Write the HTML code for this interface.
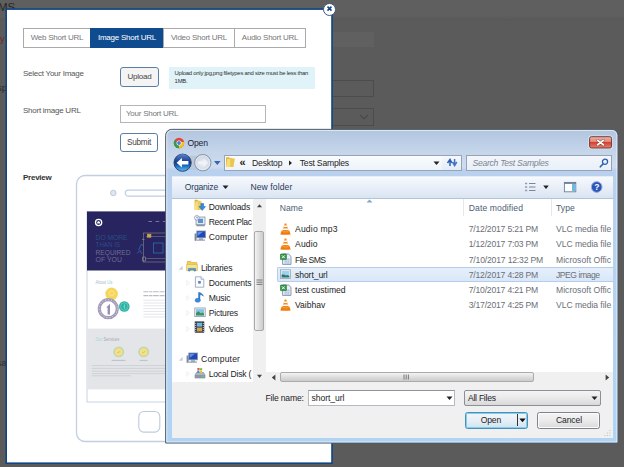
<!DOCTYPE html>
<html lang="en"><head><meta charset="utf-8"><title>Image Short URL</title>
<style>
*{box-sizing:border-box;margin:0;padding:0}
html,body{width:624px;height:467px;overflow:hidden}
body{background:#5b5b5b;font-family:"Liberation Sans",Arial,sans-serif;position:relative}
.a{position:absolute}
.t{position:absolute;white-space:nowrap;line-height:1}
/* dimmed page behind */
#bgtop{left:0;top:0;width:624px;height:21px;background:linear-gradient(#5f5f5f,#5e5e5e 17px,#585858 20px,#5b5b5b)}
/* modal */
#close{left:323px;top:3px;width:13px;height:13px;border-radius:50%;background:#fff;border:1px solid #41597a}
.tab{position:absolute;top:28px;height:20px;border:1px solid #aaa;background:#fff;color:#777;font-size:8px;letter-spacing:-.25px;text-align:center;line-height:18px;white-space:nowrap}
.lbl{color:#555;font-size:8px;letter-spacing:-.25px}
.btn{position:absolute;border:1px solid #5a7fa6;border-radius:3px;background:#f4f4f4;color:#444;font-size:8px;letter-spacing:-.25px;text-align:center}
/* dialog */
.w{font-size:9.4px;color:#1e1e2a}
</style></head><body>
<div id="bgtop" class="a"></div>

<!-- dimmed page fragments -->
<div class="t" style="left:-2px;top:2px;font-size:11.5px;color:#262626">MS</div>
<div class="t" style="left:-3px;top:35px;font-size:9px;color:#6c2a2a">ry</div>
<div class="t" style="left:-3px;top:83px;font-size:9.5px;color:#2b2b2b">sp</div>
<div class="t" style="left:-3.5px;top:358px;font-size:9.5px;color:#2b2b2b">sa</div>
<div class="a" style="left:332px;top:32px;width:42px;height:15px;background:#606060"></div>
<div class="a" style="left:332px;top:80px;width:42px;height:17px;border:1px solid #4c4c4c;border-left:0"></div>
<div class="a" style="left:332px;top:108px;width:42px;height:18px;border:1px solid #4c4c4c;border-left:0"></div>
<svg class="a" style="left:358px;top:112px" width="12" height="10"><path d="M2 3 L6 7 L10 3" fill="none" stroke="#4a4a4a" stroke-width="1.2"/></svg>
<svg id="modal" class="a" style="left:0;top:0" width="340" height="467"><rect x="6.2" y="9.1" width="325.8" height="454.1" fill="#fff" stroke="#0f4585" stroke-width="1.6"/></svg>
<div id="close" class="a"></div>
<svg class="a" style="left:323px;top:3px" width="13" height="13"><path d="M4.5 3.6 L8.5 7.6 M8.5 3.6 L4.5 7.6" stroke="#0f4585" stroke-width="1.5" fill="none"/></svg>
<!-- tabs -->
<div class="tab" style="left:23px;width:68px">Web Short URL</div>
<div class="tab" style="left:90px;width:74px;background:#0f4c8f;border-color:#0f4c8f;color:#fff">Image Short URL</div>
<div class="tab" style="left:163px;width:72px">Video Short URL</div>
<div class="tab" style="left:234px;width:72px">Audio Short URL</div>
<!-- form -->
<div class="t lbl" style="left:23px;top:70px">Select Your Image</div>
<div class="btn" style="left:120px;top:67px;width:39px;height:20px;line-height:18px">Upload</div>
<div class="a" style="left:169px;top:67px;width:146px;height:22px;background:#e0f3f8"></div>
<div class="a" style="left:174.6px;top:69px;width:144px;font-size:5.9px;letter-spacing:-.235px;line-height:8px;color:#2e2e2e">Upload only jpg,png filetypes and size must be less than 1MB.</div>
<div class="t lbl" style="left:23px;top:107px">Short image URL</div>
<div class="a" style="left:120px;top:105px;width:146px;height:18px;border:1px solid #b5b5b5;background:#fff"></div>
<div class="t" style="left:126px;top:110px;font-size:8px;letter-spacing:-.25px;color:#777">Your Short URL</div>
<div class="btn" style="left:120px;top:133px;width:38px;height:19px;line-height:17px;background:#fff;font-size:8.2px">Submit</div>
<div class="t" style="left:23px;top:174px;font-size:8px;letter-spacing:-.25px;font-weight:bold;color:#333">Preview</div>

<!-- tablet preview -->
<svg class="a" style="left:70px;top:170px" width="110" height="280" viewBox="70 170 110 280" font-family="Liberation Sans, sans-serif">
<path d="M180 175.5 H85 a8.5 8.5 0 0 0 -8.5 8.5 V433 a8.5 8.5 0 0 0 8.5 8.5 H180" fill="#fff" stroke="#c0d0e1" stroke-width="1.3"/>
<circle cx="113.3" cy="193" r="2.8" fill="#dde5ee" stroke="#b7c7d9" stroke-width=".9"/>
<path d="M180 190.2 H128.3 a3 3 0 0 0 0 6 H180" fill="#fff" stroke="#c0d0e1" stroke-width="1.2"/>
<rect x="87" y="211.5" width="100" height="190.5" fill="#fff" stroke="#b9c9d9" stroke-width=".8"/>
<rect x="87" y="211.5" width="100" height="59" fill="#27245f"/>
<circle cx="98.6" cy="222.5" r="3.1" fill="#27245f" stroke="#fff" stroke-width="1.3"/>
<path d="M97.2 223.6 v-1.6 l1.4 -1.1 l1.4 1.1 v1.6z" fill="#fff"/>
<path d="M148.4 221.5 h3.6 M155.6 221.5 h3.6 M162.8 221.5 h3.6" stroke="#8b89b0" stroke-width=".8"/>
<text x="95.6" y="239.8" font-size="7" fill="#285088" textLength="32" lengthAdjust="spacingAndGlyphs">DO MORE</text>
<text x="95.6" y="247.1" font-size="7" fill="#285088" textLength="24.5" lengthAdjust="spacingAndGlyphs">THAN IS</text>
<text x="95.6" y="254.5" font-size="7" fill="#706d94" textLength="34.8" lengthAdjust="spacingAndGlyphs">REQUIRED</text>
<text x="95.6" y="261.9" font-size="7" fill="#706d94" textLength="26.3" lengthAdjust="spacingAndGlyphs">OF YOU</text>
<g fill="none" stroke-width=".7">
<rect x="143.5" y="233" width="40" height="29" stroke="#7f7a78"/>
<path d="M146 236.5 h34 M146 258.5 h34" stroke="#6f6b86"/>
<rect x="147.5" y="234.2" width="3.4" height="3" stroke="#c9a94a" fill="#c9a94a"/>
<rect x="153.5" y="243" width="9.5" height="10" stroke="#2f78c0"/>
<path d="M138.5 250 l3 -6 l2.5 3 M137 253.5 l3 -3 l2 3.5 M165 244 l3 4 l-3 4 M170 243 l3 5" stroke="#2f78c0"/>
<path d="M142.5 257 h3 v4 h-3z M142 239.5 h2.5" stroke="#8d8797"/>
</g>
<text x="95.4" y="283.8" font-size="4.8" fill="#b4b8c6" textLength="17" lengthAdjust="spacingAndGlyphs">About <tspan fill="#86d3cc">Us</tspan></text>
<circle cx="111.6" cy="293.9" r="6.3" fill="#f6d75c"/>
<circle cx="111.8" cy="293.2" r="2.5" fill="none" stroke="#fae9a0" stroke-width=".8"/>
<circle cx="108.3" cy="308.7" r="9" fill="#fff" stroke="#a39db9" stroke-width="3.2"/>
<circle cx="108.3" cy="308.7" r="9" fill="none" stroke="#e6e3ee" stroke-width="1" stroke-dasharray=".9 2.1"/>
<path d="M106.2 307.4 l3.8 -3.6 v10.6 h-2.4 v-6.6 z" fill="#9690ae"/>
<circle cx="124.3" cy="306.5" r="5.3" fill="#2bb3a4"/>
<circle cx="124.3" cy="306.5" r="3.7" fill="none" stroke="#7fd6cb" stroke-width=".6"/>
<path d="M125.4 304 a2.7 2.7 0 0 0 0 5 a3.4 3.4 0 0 1 0 -5z" fill="#e4f7f4"/>
<g stroke="#dcdee3" stroke-width=".8">
<path d="M143.4 291.8 h36 M143.4 295.6 h36" stroke="#b9bcc4" stroke-width="1.1" stroke-dasharray="5 .7 3 .6 6 .8"/>
<path d="M143.4 300.2 h36 M143.4 303 h36 M143.4 305.8 h36 M143.4 308.6 h36 M143.4 311.4 h36 M143.4 314.2 h36 M143.4 317 h30"/>
</g>
<rect x="87.2" y="328.6" width="100" height="60.8" fill="#e4e5e8"/>
<text x="95.4" y="341.4" font-size="4.8" fill="#a6aab4" textLength="24" lengthAdjust="spacingAndGlyphs"><tspan fill="#9fdad3">Our</tspan> Services</text>
<circle cx="118.7" cy="351.9" r="4.6" fill="#f6df8a" stroke="#bfdaa6" stroke-width="1.7"/>
<circle cx="143.7" cy="351.9" r="4.6" fill="#f6df8a" stroke="#bfdaa6" stroke-width="1.7"/>
<path d="M117.2 352 l1.1 1.1 l1.9 -2.3 M142.2 352 l1.1 1.1 l1.9 -2.3" fill="none" stroke="#eeb457" stroke-width=".8"/>
<path d="M111.6 360.4 h14 M139.6 360.4 h8" stroke="#bcbfc6" stroke-width="1"/>
<g stroke="#c9cbd1" stroke-width=".8">
<path d="M91.8 365.6 h90 M91.8 368.4 h90 M91.8 371.2 h90 M91.8 373.6 h90 M91.8 375.8 h39"/>
</g>
<rect x="138.8" y="411.5" width="21" height="20.6" rx="5" fill="#fff" stroke="#bccbdc" stroke-width="1.1"/>
</svg>
<!-- Open file dialog -->
<svg id="dlg" class="a" style="left:160px;top:124px" width="464" height="326" viewBox="160 124 464 326">
<defs><linearGradient id="fr" gradientUnits="userSpaceOnUse" x1="0" y1="129" x2="0" y2="443"><stop offset="0" stop-color="#b1c5de"/><stop offset=".07" stop-color="#c4d5ea"/><stop offset=".121" stop-color="#cfddee"/><stop offset=".131" stop-color="#b9d1ee"/><stop offset=".382" stop-color="#b9d2ef"/><stop offset="1" stop-color="#b0d4f4"/></linearGradient></defs>
<path d="M165.65 443.05 V135.35 a6 6 0 0 1 6 -6 H611.95 a6 6 0 0 1 6 6 V443.05 Z" fill="url(#fr)" stroke="#4f5a67" stroke-width="1"/>
<path d="M166.75 441.95 V135.6 a5.1 5.1 0 0 1 5.1 -5.1 H611.75 a5.1 5.1 0 0 1 5.1 5.1 V441.95 Z" fill="none" stroke="#fff" stroke-opacity=".55" stroke-width="1"/>
</svg>
<svg class="a" style="left:173px;top:136.5px" width="12" height="12" viewBox="-6 -6 12 12">
<circle r="5.2" fill="#e94335"/>
<path d="M0 0 L-4.5 2.6 A5.2 5.2 0 0 0 0 5.2 L1 5.1 Z" fill="#2d9f4b"/>
<path d="M-4.5 -2.6 L0 0 L-1.2 5.1 A5.2 5.2 0 0 1 -4.5 -2.6Z" fill="#2d9f4b"/>
<path d="M0 0 L0.8 -1.2 L5.1 -1 A5.2 5.2 0 0 1 0 5.2 Z" fill="#f8c21b"/>
<circle r="2.5" fill="#fff"/><circle r="1.9" fill="#3f7fe8"/></svg>
<div class="t" style="left:187.5px;top:139px;font-size:8.6px;color:#1a2233;letter-spacing:-0.179px;">Open</div>
<svg class="a" style="left:586px;top:133px" width="30" height="19" viewBox="586 133 30 19"><defs><linearGradient id="cb" x1="0" y1="0" x2="0" y2="1"><stop offset="0" stop-color="#eeb1a6"/><stop offset=".45" stop-color="#e38878"/><stop offset=".5" stop-color="#d5402b"/><stop offset="1" stop-color="#e48370"/></linearGradient></defs><rect x="589.1" y="136.2" width="23" height="12.3" rx="2.2" fill="none" stroke="#fff" stroke-opacity=".5" stroke-width="1.6"/><rect x="589.6" y="136.7" width="22" height="11.3" rx="1.8" fill="url(#cb)" stroke="#5e3036" stroke-width=".9"/><path d="M597.6 140.4 L603.4 144.8 M603.4 140.4 L597.6 144.8" stroke="#5a2d2d" stroke-opacity=".55" stroke-width="2.8" stroke-linecap="round"/><path d="M597.6 140.4 L603.4 144.8 M603.4 140.4 L597.6 144.8" stroke="#fff" stroke-width="1.7" stroke-linecap="round"/></svg>
<svg class="a" style="left:172px;top:152px" width="52" height="22" viewBox="172 152 52 22">
<defs><linearGradient id="gb" x1="0" y1="0" x2="0" y2="1"><stop offset="0" stop-color="#3565b8"/><stop offset=".48" stop-color="#133a8c"/><stop offset=".62" stop-color="#1556b4"/><stop offset="1" stop-color="#55c6fc"/></linearGradient>
<linearGradient id="gb2" x1="0" y1="0" x2="0" y2="1"><stop offset="0" stop-color="#6d93d6" stop-opacity=".75"/><stop offset="1" stop-color="#2a55a8" stop-opacity="0"/></linearGradient>
<radialGradient id="gf" cx=".5" cy=".55" r=".6"><stop offset="0" stop-color="#eef2f7"/><stop offset=".6" stop-color="#d4dce7"/><stop offset="1" stop-color="#bcc6d4"/></radialGradient></defs>
<path d="M184 155.8 H202 V169.6 H184Z" fill="#aebccf" opacity=".55"/>
<circle cx="182.6" cy="162.7" r="8.6" fill="url(#gb)" stroke="#2d3f63" stroke-width="1"/>
<path d="M175 161.5 a7.6 7.6 0 0 1 15.2 0 q-7.6 2.4 -15.2 0z" fill="url(#gb2)"/>
<path d="M176.6 162.7 L181.9 157.9 V160.9 H188.4 V164.5 H181.9 V167.5Z" fill="#fff"/>
<circle cx="202.8" cy="162.7" r="8.2" fill="url(#gf)" stroke="#8793a5" stroke-width="1"/>
<circle cx="202.8" cy="162.7" r="7" fill="none" stroke="#fff" stroke-width=".8" opacity=".7"/>
<path d="M208.4 162.7 L203.6 158.6 V161.2 H198 V164.2 H203.6 V166.8Z" fill="#f2f5f9" opacity=".8"/>
<path d="M214 160.9 H220.6 L217.3 164.9Z" fill="#3466b8"/>
</svg>
<div class="a" style="left:223.5px;top:154.5px;width:219px;height:16px;border:1px solid #98a3b4;background:linear-gradient(#fafcfe,#eef3fa)"></div>
<div class="a" style="left:442px;top:154.5px;width:20px;height:16px;border:1px solid #98a3b4;border-left:0;background:linear-gradient(#f6f9fd,#e3ecf7)"></div>
<svg class="a" style="left:225px;top:156px" width="11" height="12" viewBox="0 0 11 12">
<path d="M1 1.2 H4.2 L5 2.2 H7.5 V11 H1Z" fill="#e2b93c"/><path d="M2.2 3 H9.6 L8.2 11 H1Z" fill="#f6dc7a"/><path d="M5.2 2.6 H9.8 L8.4 11 H5.2Z" fill="#ecc650"/></svg>
<div class="t" style="left:239.6px;top:157px;font-size:11px;color:#222;font-weight:bold;">«</div>
<div class="t" style="left:252px;top:159px;font-size:8.6px;color:#1d1d26;letter-spacing:-0.175px;">Desktop</div>
<svg class="a" style="left:288px;top:160px" width="5" height="6"><path d="M1 .5 L4 3 L1 5.5Z" fill="#222"/></svg>
<div class="t" style="left:299.7px;top:159px;font-size:8.6px;color:#1d1d26;letter-spacing:-0.193px;">Test Samples</div>
<svg class="a" style="left:433px;top:161px" width="7" height="5"><path d="M.5 .5 H6.5 L3.5 4Z" fill="#222"/></svg>
<svg class="a" style="left:446px;top:157px" width="12" height="11" viewBox="0 0 12 11"><g fill="none" stroke="#2f62b5" stroke-width="1.5"><path d="M1.5 6 L4 2.5 L6 6 M4 3 V9"/><path d="M6.5 5 L8.6 8.5 L10.8 5 M8.6 8 V2" stroke="#3f76c8"/></g></svg>
<div class="a" style="left:466px;top:155px;width:146px;height:15.5px;border:1px solid #98a3b4;background:linear-gradient(#f3f7fc,#e9f0f9)"></div>
<div class="t" style="left:472.6px;top:159px;font-size:8.6px;color:#7d8592;font-style:italic;letter-spacing:-0.29px;">Search Test Samples</div>
<svg class="a" style="left:599px;top:157.5px" width="10" height="10" viewBox="0 0 10 10"><circle cx="6" cy="3.8" r="2.6" fill="#e8f1fb" stroke="#2c5faf" stroke-width="1.3"/><path d="M4 6 L1.3 8.8" stroke="#2c5faf" stroke-width="1.6" stroke-linecap="round"/></svg>
<div class="a" style="left:171.5px;top:176px;width:441.5px;height:23px;background:linear-gradient(#f6f9fd,#e9eff8 50%,#d9e4f2);border-top:1px solid #e4ecf6;border-bottom:1px solid #b3c3d9"></div>
<div class="t" style="left:184.8px;top:183px;font-size:8.6px;color:#2a3b58;letter-spacing:-0.214px;">Organize</div>
<svg class="a" style="left:222px;top:184.8px" width="7" height="5"><path d="M.5 .5 H6.5 L3.5 4Z" fill="#222"/></svg>
<div class="t" style="left:250.4px;top:183px;font-size:8.6px;color:#2a3b58;letter-spacing:0.099px;">New folder</div>
<svg class="a" style="left:524px;top:181px" width="90" height="13" viewBox="524 181 90 13">
<g stroke="#7a8699" stroke-width="1"><path d="M525 183.5 h2.2 M525 187 h2.2 M525 190.5 h2.2" stroke="#8e9db5" stroke-width="1.6"/><path d="M529 183.5 h6.5 M529 187 h6.5 M529 190.5 h6.5"/></g>
<path d="M543.2 185.6 h5.6 l-2.8 3.3z" fill="#222"/>
<rect x="564.4" y="182.4" width="11.4" height="9.4" fill="#fdfefe" stroke="#6d7f99" stroke-width=".9"/><path d="M564.4 183.2 h11.4" stroke="#5d6f8a" stroke-width="1.2"/><rect x="572" y="184" width="3.2" height="7.2" fill="#6bb9e6"/>
<circle cx="596.7" cy="187" r="5.4" fill="#2b56b8" stroke="#9db4e2" stroke-width="1"/>
</svg>
<div class="t" style="left:594.3px;top:183px;font-size:8.5px;color:#fff;font-weight:bold;">?</div>
<div class="a" style="left:171.5px;top:199px;width:441.5px;height:183.3px;background:#fff"></div>
<div class="a" style="left:253px;top:199px;width:13px;height:183.3px;background:#f0f0f0"></div>
<div class="a" style="left:254px;top:230.5px;width:9.5px;height:100px;border:1px solid #a9a9a9;border-radius:2px;background:linear-gradient(90deg,#f3f3f3,#dedede 50%,#cdcdcd)"></div>
<svg class="a" style="left:255.5px;top:279px" width="7" height="7"><path d="M.5 1 h6 M.5 3.2 h6 M.5 5.4 h6" stroke="#6d6d6d" stroke-width=".9"/></svg>
<svg class="a" style="left:255.5px;top:202.5px" width="7" height="5"><path d="M1 4.3 L3.5 1.2 L6 4.3Z" fill="#444"/></svg>
<svg class="a" style="left:255.5px;top:374px" width="7" height="5"><path d="M1 .8 L3.5 3.9 L6 .8Z" fill="#444"/></svg>
<div class="a" style="left:171.5px;top:198px;width:81.5px;height:184.3px;overflow:hidden">
<svg class="a" style="left:22.5px;top:1.4px" width="12" height="12" viewBox="0 0 12 12"><path d="M.6 .8 H3.4 L4.2 1.8 H6.6 V11 H.6Z" fill="#e0b63a"/><path d="M1.6 2.4 H7.4 L6.6 11 H.6Z" fill="#f7df80"/><path d="M3.6 2.4 H7.4 L6.6 11 H3.6Z" fill="#eccb58"/><path d="M6.9 4.6 h2.7 v3 h1.9 l-3.25 3.8 l-3.25 -3.8 h1.9z" fill="#2f8ee0" stroke="#1a5fae" stroke-width=".5"/></svg>
<div class="t" style="left:37.2px;top:5px;font-size:8.6px;color:#1d1d26;letter-spacing:-0.118px;">Downloads</div>
<svg class="a" style="left:22.5px;top:16.65px" width="12" height="12" viewBox="0 0 12 12"><rect x="2" y="2" width="9" height="7.6" fill="#e3e9f0" stroke="#8a96a8" stroke-width=".8"/><rect x="4" y="3.8" width="5" height="4.2" fill="#5e92d4"/><path d="M2.4 10.6 h8.4" stroke="#8d97a6" stroke-width="1.4"/><circle cx="2.8" cy="2.8" r="2.3" fill="#f9fbfd" stroke="#7f8da3" stroke-width=".7"/><path d="M2.8 1.6 V2.9 H3.9" stroke="#3a5d9a" stroke-width=".6" fill="none"/></svg>
<div class="t" style="left:37.2px;top:20px;font-size:8.6px;color:#1d1d26;letter-spacing:-0.297px;">Recent Plac</div>
<svg class="a" style="left:22.5px;top:31.9px" width="12" height="12" viewBox="0 0 12 12"><rect x="2.8" y="1" width="8.6" height="6.8" fill="#1f49b8" stroke="#8892a5" stroke-width=".8"/><path d="M3.6 2 h5 l-5 4z" fill="#5d8ff0"/><path d="M5 8.2 h4 v1.4 h2 v1.2 h-8 v-1.2 h2z" fill="#9aa3b3"/><rect x=".6" y="3.5" width="2" height="7.3" fill="#7d8797"/></svg>
<div class="t" style="left:37.2px;top:35px;font-size:8.6px;color:#1d1d26;letter-spacing:0.177px;">Computer</div>
<svg class="a" style="left:14.8px;top:62.4px" width="12" height="12" viewBox="0 0 12 12"><path d="M1.2 1.5 H5 L5.8 2.6 H10.8 V9 H1.2Z" fill="#f0cf5c" stroke="#c9a437" stroke-width=".6"/><path d="M.6 4.6 H11.4 V10.6 H.6Z" fill="#f9e48d" stroke="#d4b246" stroke-width=".6"/><path d="M2.4 8.4 h7.2 v2.6 h-1.6 v-1.3 h-4 v1.3 h-1.6z" fill="#4aa0dc" stroke="#2b72b5" stroke-width=".5"/></svg>
<div class="t" style="left:29.5px;top:66px;font-size:8.6px;color:#1d1d26;letter-spacing:-0.185px;">Libraries</div>
<svg class="a" style="left:6.0px;top:66.6px" width="6" height="6"><path d="M4.6 .8 V4.8 H.8Z" fill="#c9ced6"/></svg>
<svg class="a" style="left:22.5px;top:77.65px" width="11" height="12" viewBox="0 0 11 12"><path d="M1.4 .8 H7 L9.8 3.4 V11.2 H1.4Z" fill="#fbfcfe" stroke="#8f9db3" stroke-width=".8"/><path d="M7 .8 V3.4 H9.8" fill="#dfe6f0" stroke="#8f9db3" stroke-width=".6"/><rect x="4.2" y="5" width="2.6" height="2.6" fill="#5a7fb8"/></svg>
<div class="t" style="left:37.2px;top:81px;font-size:8.6px;color:#1d1d26;letter-spacing:-0.062px;">Documents</div>
<svg class="a" style="left:14.5px;top:81.85px" width="5" height="6"><path d="M.8 .6 L3.6 3 L.8 5.4Z" fill="#fff" stroke="#e6e9ee" stroke-width=".7"/></svg>
<svg class="a" style="left:22.5px;top:92.9px" width="11" height="12" viewBox="0 0 11 12"><path d="M4.6 9 V1.4 C6.5 1.4 8.6 2.6 9.4 5.2 C8 3.8 6.8 3.6 5.9 3.8 V9.4" fill="#2f7fd8" stroke="#1d5fb5" stroke-width=".5"/><ellipse cx="3.7" cy="9.3" rx="2.6" ry="2" fill="#3b8be2" stroke="#1d5fb5" stroke-width=".5"/></svg>
<div class="t" style="left:37.2px;top:96px;font-size:8.6px;color:#1d1d26;letter-spacing:-0.165px;">Music</div>
<svg class="a" style="left:14.5px;top:97.1px" width="5" height="6"><path d="M.8 .6 L3.6 3 L.8 5.4Z" fill="#fff" stroke="#e6e9ee" stroke-width=".7"/></svg>
<svg class="a" style="left:22.5px;top:108.15px" width="12" height="12" viewBox="0 0 12 12"><rect x=".8" y="2" width="10.4" height="8.6" fill="#f4f6f8" stroke="#8b96a6" stroke-width=".8"/><rect x="2" y="3.2" width="8" height="6.2" fill="#7fc3ea"/><path d="M2 9.4 V7 L4.6 5.2 L7 7.4 L8.4 6.4 L10 7.8 V9.4Z" fill="#3f8f5c"/></svg>
<div class="t" style="left:37.2px;top:111px;font-size:8.6px;color:#1d1d26;letter-spacing:-0.224px;">Pictures</div>
<svg class="a" style="left:14.5px;top:112.35px" width="5" height="6"><path d="M.8 .6 L3.6 3 L.8 5.4Z" fill="#fff" stroke="#e6e9ee" stroke-width=".7"/></svg>
<svg class="a" style="left:22.5px;top:123.4px" width="11" height="12" viewBox="0 0 11 12"><rect x="1" y=".8" width="9" height="10.6" fill="#3c4250" stroke="#23272f" stroke-width=".5"/><rect x="3" y="1.8" width="5" height="3.8" fill="#69b7e8"/><rect x="3" y="6.6" width="5" height="3.8" fill="#d7a34a"/><path d="M1.7 2 v1 M1.7 4 v1 M1.7 6 v1 M1.7 8 v1 M1.7 10 v.8 M9.3 2 v1 M9.3 4 v1 M9.3 6 v1 M9.3 8 v1 M9.3 10 v.8" stroke="#e8ebf0" stroke-width=".8"/></svg>
<div class="t" style="left:37.2px;top:127px;font-size:8.6px;color:#1d1d26;letter-spacing:-0.248px;">Videos</div>
<svg class="a" style="left:14.5px;top:127.6px" width="5" height="6"><path d="M.8 .6 L3.6 3 L.8 5.4Z" fill="#fff" stroke="#e6e9ee" stroke-width=".7"/></svg>
<svg class="a" style="left:14.8px;top:153.9px" width="12" height="12" viewBox="0 0 12 12"><rect x="2.8" y="1" width="8.6" height="6.8" fill="#1f49b8" stroke="#8892a5" stroke-width=".8"/><path d="M3.6 2 h5 l-5 4z" fill="#5d8ff0"/><path d="M5 8.2 h4 v1.4 h2 v1.2 h-8 v-1.2 h2z" fill="#9aa3b3"/><rect x=".6" y="3.5" width="2" height="7.3" fill="#7d8797"/></svg>
<div class="t" style="left:29.5px;top:157px;font-size:8.6px;color:#1d1d26;letter-spacing:0.177px;">Computer</div>
<svg class="a" style="left:6.0px;top:158.1px" width="6" height="6"><path d="M4.6 .8 V4.8 H.8Z" fill="#c9ced6"/></svg>
<svg class="a" style="left:22.5px;top:169.15px" width="12" height="12" viewBox="0 0 12 12"><path d="M1 8 L2.6 5.4 H9.4 L11 8 V11 H1Z" fill="#aeb6c2" stroke="#6f7888" stroke-width=".6"/><rect x="1" y="8" width="10" height="3" fill="#8d97a6"/><rect x="8" y="9" width="2" height="1" fill="#58d05a"/><path d="M3.4 1 h2.2 v2.2 h-2.2z" fill="#e8542e"/><path d="M6 1.2 h2.2 v2.2 h-2.2z" fill="#7cc043"/><path d="M3.2 3.6 h2.2 v2.2 h-2.2z" fill="#3b8fe0"/><path d="M5.8 3.8 h2.2 v2.2 h-2.2z" fill="#f3c12e"/></svg>
<div class="t" style="left:37.2px;top:172px;font-size:8.6px;color:#1d1d26;letter-spacing:-0.193px;">Local Disk (</div>
<svg class="a" style="left:14.5px;top:173.35px" width="5" height="6"><path d="M.8 .6 L3.6 3 L.8 5.4Z" fill="#fff" stroke="#e6e9ee" stroke-width=".7"/></svg>
</div>
<div class="a" style="left:463.3px;top:199px;width:1px;height:17px;background:#e3e8ef"></div>
<div class="a" style="left:551.3px;top:199px;width:1px;height:17px;background:#e3e8ef"></div>
<svg class="a" style="left:365.5px;top:198.6px" width="7" height="4"><path d="M.5 3.6 L3.5 .5 L6.5 3.6Z" fill="#7aa9c9"/></svg>
<div class="t" style="left:279.8px;top:204px;font-size:8.6px;color:#4d5d75;letter-spacing:-0.014px;">Name</div>
<div class="t" style="left:468.7px;top:204px;font-size:8.6px;color:#4d5d75;letter-spacing:0.111px;">Date modified</div>
<div class="t" style="left:556px;top:204px;font-size:8.6px;color:#4d5d75;letter-spacing:0.085px;">Type</div>
<div class="a" style="left:276.8px;top:267px;width:336.2px;height:15px;border:1px solid #b4cdec;border-right:0;border-radius:2px 0 0 2px;background:linear-gradient(#e6f0fb,#d9e7f8)"></div>
<div class="a" style="left:266px;top:217px;width:347px;height:100px;overflow:hidden">
<svg class="a" style="left:14.3px;top:5.7px" width="11" height="12" viewBox="0 0 11 12"><path d="M4.7 .5 h1.6 l2.5 8 h-6.6z" fill="#f58a1a"/><path d="M4.1 2.6 h2.8 l.45 1.5 h-3.7z M3.2 5.6 h4.6 l.45 1.5 h-5.5z" fill="#fff"/><path d="M1.5 7.8 h8 l1.2 3.6 q-5.2 .9 -10.4 0z" fill="#f07c10"/><path d="M2.6 8.5 q2.9 1 5.8 0" stroke="#f9b266" stroke-width=".7" fill="none"/></svg>
<div class="t" style="left:29px;top:8px;font-size:8.6px;color:#1d1d26;letter-spacing:0.173px;">Audio mp3</div>
<div class="t" style="left:202.7px;top:8px;font-size:8.6px;color:#6b6f78;letter-spacing:-0.192px;">7/12/2017 5:21 PM</div>
<div class="t" style="left:290px;top:8px;font-size:8.6px;color:#6b6f78;letter-spacing:-0.056px;">VLC media file</div>
<svg class="a" style="left:14.3px;top:20.95px" width="11" height="12" viewBox="0 0 11 12"><path d="M4.7 .5 h1.6 l2.5 8 h-6.6z" fill="#f58a1a"/><path d="M4.1 2.6 h2.8 l.45 1.5 h-3.7z M3.2 5.6 h4.6 l.45 1.5 h-5.5z" fill="#fff"/><path d="M1.5 7.8 h8 l1.2 3.6 q-5.2 .9 -10.4 0z" fill="#f07c10"/><path d="M2.6 8.5 q2.9 1 5.8 0" stroke="#f9b266" stroke-width=".7" fill="none"/></svg>
<div class="t" style="left:29px;top:23px;font-size:8.6px;color:#1d1d26;letter-spacing:0.151px;">Audio</div>
<div class="t" style="left:202.7px;top:23px;font-size:8.6px;color:#6b6f78;letter-spacing:-0.192px;">1/12/2017 7:03 PM</div>
<div class="t" style="left:290px;top:23px;font-size:8.6px;color:#6b6f78;letter-spacing:-0.056px;">VLC media file</div>
<svg class="a" style="left:14.3px;top:36.2px" width="12" height="12" viewBox="0 0 12 12"><path d="M2.6 1 H8.6 L11 3.4 V11.4 H2.6Z" fill="#e9f1fa" stroke="#6f819c" stroke-width=".8"/><path d="M4 6.4 h6 M4 8.2 h6 M4 10 h6 M6 5 v6 M8.2 5 v6" stroke="#9db6d4" stroke-width=".6"/><rect x=".4" y="1" width="6" height="5.6" rx=".6" fill="#2f9a4a" stroke="#1b6b31" stroke-width=".6"/><path d="M2 2.4 L4.8 5.2 M4.8 2.4 L2 5.2" stroke="#fff" stroke-width="1"/></svg>
<div class="t" style="left:29px;top:39px;font-size:8.6px;color:#1d1d26;letter-spacing:-0.555px;">File SMS</div>
<div class="t" style="left:202.7px;top:39px;font-size:8.6px;color:#6b6f78;letter-spacing:-0.168px;">7/10/2017 12:32 PM</div>
<div class="t" style="left:290px;top:39px;font-size:8.6px;color:#6b6f78;letter-spacing:0.022px;">Microsoft Offic</div>
<svg class="a" style="left:14.3px;top:51.45px" width="11" height="12" viewBox="0 0 11 12"><rect x=".5" y="1.8" width="10" height="8.8" fill="#f5f7f9" stroke="#8a96a8" stroke-width=".7"/><rect x="1.6" y="2.9" width="7.8" height="6.6" fill="#9fd2ee"/><path d="M1.6 9.5 V6.8 C3.4 6 5 6.6 6 7.6 L7.6 6.9 L9.4 8 V9.5Z" fill="#2e7a6a"/></svg>
<div class="t" style="left:29px;top:54px;font-size:8.6px;color:#1d1d26;letter-spacing:-0.083px;">short_url</div>
<div class="t" style="left:202.7px;top:54px;font-size:8.6px;color:#6b6f78;letter-spacing:-0.192px;">7/12/2017 4:28 PM</div>
<div class="t" style="left:290px;top:54px;font-size:8.6px;color:#6b6f78;letter-spacing:-0.475px;">JPEG image</div>
<svg class="a" style="left:14.3px;top:66.7px" width="12" height="12" viewBox="0 0 12 12"><path d="M2.6 1 H8.6 L11 3.4 V11.4 H2.6Z" fill="#e9f1fa" stroke="#6f819c" stroke-width=".8"/><path d="M4 6.4 h6 M4 8.2 h6 M4 10 h6 M6 5 v6 M8.2 5 v6" stroke="#9db6d4" stroke-width=".6"/><rect x=".4" y="1" width="6" height="5.6" rx=".6" fill="#2f9a4a" stroke="#1b6b31" stroke-width=".6"/><path d="M2 2.4 L4.8 5.2 M4.8 2.4 L2 5.2" stroke="#fff" stroke-width="1"/></svg>
<div class="t" style="left:29px;top:69px;font-size:8.6px;color:#1d1d26;">test custimed</div>
<div class="t" style="left:202.7px;top:69px;font-size:8.6px;color:#6b6f78;letter-spacing:-0.192px;">7/10/2017 4:21 PM</div>
<div class="t" style="left:290px;top:69px;font-size:8.6px;color:#6b6f78;letter-spacing:0.022px;">Microsoft Offic</div>
<svg class="a" style="left:14.3px;top:81.95px" width="11" height="12" viewBox="0 0 11 12"><path d="M4.7 .5 h1.6 l2.5 8 h-6.6z" fill="#f58a1a"/><path d="M4.1 2.6 h2.8 l.45 1.5 h-3.7z M3.2 5.6 h4.6 l.45 1.5 h-5.5z" fill="#fff"/><path d="M1.5 7.8 h8 l1.2 3.6 q-5.2 .9 -10.4 0z" fill="#f07c10"/><path d="M2.6 8.5 q2.9 1 5.8 0" stroke="#f9b266" stroke-width=".7" fill="none"/></svg>
<div class="t" style="left:29px;top:84px;font-size:8.6px;color:#1d1d26;letter-spacing:-0.024px;">Vaibhav</div>
<div class="t" style="left:202.7px;top:84px;font-size:8.6px;color:#6b6f78;letter-spacing:-0.192px;">3/17/2017 4:25 PM</div>
<div class="t" style="left:290px;top:84px;font-size:8.6px;color:#6b6f78;letter-spacing:-0.056px;">VLC media file</div>
</div>
<div class="a" style="left:266px;top:371.5px;width:347px;height:11px;background:#f0f0f0"></div>
<div class="a" style="left:280px;top:372px;width:254px;height:10px;border:1px solid #ababab;border-radius:2px;background:linear-gradient(#f3f3f3,#dedede 50%,#cbcbcb)"></div>
<svg class="a" style="left:403px;top:374px" width="7" height="6"><path d="M1 .5 v5 M3.2 .5 v5 M5.4 .5 v5" stroke="#6d6d6d" stroke-width=".9"/></svg>
<svg class="a" style="left:270.5px;top:373.5px" width="5" height="7"><path d="M4.4 .4 L.8 3.5 L4.4 6.6Z" fill="#444"/></svg>
<svg class="a" style="left:605px;top:373.5px" width="5" height="7"><path d="M.6 .4 L4.2 3.5 L.6 6.6Z" fill="#444"/></svg>
<div class="a" style="left:171.5px;top:382.3px;width:441.5px;height:56px;background:#f0f0f0"></div>
<div class="t" style="left:265.4px;top:394px;font-size:8.6px;color:#1d1d26;letter-spacing:-0.172px;">File name:</div>
<div class="a" style="left:308px;top:389.8px;width:147px;height:16px;border:1px solid #b4b9c2;border-top-color:#8e949e;background:#fff"></div>
<div class="t" style="left:311.5px;top:394px;font-size:8.6px;color:#1d1d26;letter-spacing:-0.058px;">short_url</div>
<svg class="a" style="left:445.5px;top:396px" width="7" height="5"><path d="M.5 .5 H6.5 L3.5 4Z" fill="#222"/></svg>
<div class="a" style="left:464px;top:389.8px;width:137px;height:16px;border:1px solid #8a8f98;border-radius:2px;background:linear-gradient(#f4f4f4,#e9e9e9 50%,#d9d9d9)"></div>
<div class="t" style="left:468px;top:394px;font-size:8.6px;color:#1d1d26;letter-spacing:-0.263px;">All Files</div>
<svg class="a" style="left:591px;top:396px" width="7" height="5"><path d="M.5 .5 H6.5 L3.5 4Z" fill="#222"/></svg>
<div class="a" style="left:465px;top:411.5px;width:62.5px;height:17px;border:1px solid #4b8fb8;border-radius:2.5px;background:linear-gradient(#f1f6fa,#e6eff6 50%,#d3e3ef);box-shadow:inset 0 0 0 1px #7fd0ee"></div>
<div class="a" style="left:517px;top:414px;width:1px;height:12px;background:#333"></div>
<div class="t" style="left:480.7px;top:416px;font-size:8.6px;color:#1d1d26;letter-spacing:-0.146px;">Open</div>
<svg class="a" style="left:519px;top:418px" width="7" height="5"><path d="M.3 .5 H6.7 L3.5 4.3Z" fill="#111"/></svg>
<div class="a" style="left:537.3px;top:411.5px;width:63px;height:17px;border:1px solid #7d838c;border-radius:2.5px;background:linear-gradient(#f4f4f4,#ebebeb 50%,#dadada);box-shadow:inset 0 0 0 1px #fbfbfb"></div>
<div class="t" style="left:555.9px;top:416px;font-size:8.6px;color:#1d1d26;letter-spacing:-0.114px;">Cancel</div>
<svg class="a" style="left:604px;top:429px" width="8" height="8"><path d="M6 1 v1 M6 3.5 v1 M3.5 3.5 v1 M6 6 v1 M3.5 6 v1 M1 6 v1" stroke="#c2c6cc" stroke-width="1.2"/></svg>
</body></html>
